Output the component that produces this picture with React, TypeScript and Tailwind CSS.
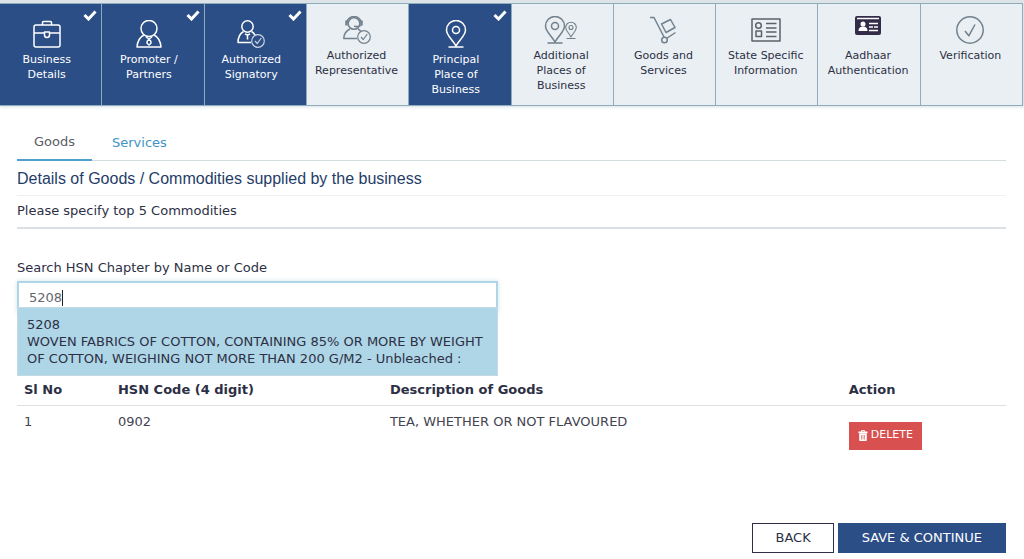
import { useState, type ReactNode } from "react";

type StepState = "done" | "idle";

interface Step {
  label: string;
  lines: string[];
  state: StepState;
  icon: ReactNode;
}

function Drawing({ width, height = 28, children }: { width: number; height?: number; children: ReactNode }) {
  return (
    <svg
      width={width}
      height={height}
      viewBox={`0 0 ${width} ${height}`}
      fill="none"
      stroke="currentColor"
      strokeWidth="1.5"
      strokeLinejoin="round"
      aria-hidden="true"
    >
      {children}
    </svg>
  );
}

const briefcase = (
  <Drawing width={28}>
    <rect x="1" y="5" width="26" height="22" rx="2" />
    <path d="M9.500 5V2.500a1 1 0 0 1 1-1h7a1 1 0 0 1 1 1V5M1 13h10.500M16.500 13H27M11.500 12h5v3a2.500 2.500 0 0 1-5 0z" />
  </Drawing>
);

const person = (
  <Drawing width={26}>
    <ellipse cx="13" cy="8.500" rx="8" ry="8" />
    <path d="M8 15C4 17 1.500 21 1 27h24c-.5-6-3-10-7-12M10 17l3 2 3-2M13 19c-1.800 1.500-2.300 2.800-2 4.200l2 1.800 2-1.800c.3-1.400-.2-2.700-2-4.200z" />
  </Drawing>
);

const signatory = (
  <Drawing width={28}>
    <circle cx="10.500" cy="6.500" r="5.700" />
    <path d="M6.500 11.500C3 13.500 1 17 1 22.500h13M14.500 11.500c1.800 1 2.700 2.300 3.500 3.700" />
    <path d="M8 14l2.500 1 2.500-1M10.500 15v4.500" />
    <g strokeWidth="1.2" opacity="0.75">
      <circle cx="21" cy="21" r="6.300" />
      <path d="m18 21 2.300 2.500 4-5.500" />
    </g>
  </Drawing>
);

const representative = (
  <Drawing width={28}>
    <path d="M4 6.500a7 6 0 0 1 14 0" />
    <circle cx="11" cy="7.500" r="5.800" />
    <path d="M3.500 4.500v5M18.500 4.500v5" strokeWidth="2.500" />
    <path d="M18 9.500c-1.500 1-3.500 1.200-7 .8M7 13C3.500 14.500 1 17 .8 22.500H14M15 13c1.500.8 2.200 1.500 3 2.500" />
    <circle cx="21" cy="21" r="6.300" strokeWidth="1.200" />
    <path d="m18 21 2.300 2.500 4-5.500" strokeWidth="1.200" />
  </Drawing>
);

const pin = (
  <Drawing width={22}>
    <path d="M11 26C7 19 1.500 15.500 1.500 10a9.500 9.500 0 0 1 19 0C20.500 15.500 15 19 11 26zM3.500 27h15" />
    <circle cx="11" cy="10" r="3.500" />
  </Drawing>
);

const pins = (
  <Drawing width={34}>
    <path d="M11 26C7 19 1.500 15.500 1.500 10a9.500 9.500 0 0 1 19 0C20.500 15.500 15 19 11 26zM3.500 27h15" />
    <circle cx="11" cy="10" r="3.500" />
    <path d="M27 21c-2-4-5.300-6-5.300-9.500a5.300 5.300 0 0 1 10.600 0C32.300 15 29 17 27 21zM22.500 22.500h9" strokeWidth="1.100" />
    <circle cx="27" cy="11.500" r="2" strokeWidth="1.100" />
  </Drawing>
);

const trolley = (
  <Drawing width={28}>
    <path d="M1 1.500h4L15 21M17.500 22.500l9-6M12.500 8 21.500 3.500 26 11.500 17 16.500z" />
    <circle cx="15.500" cy="24" r="2.800" />
  </Drawing>
);

const form = (
  <Drawing width={30}>
    <g stroke="#5f6069">
      <rect x="1" y="3" width="28" height="22" />
      <circle cx="7.500" cy="9.500" r="2.800" />
      <rect x="5" y="15" width="5.500" height="5.500" />
      <path d="M15 7.500h10.500M15 12h10.500M15 16h10.500M15 20.500h10.500" />
    </g>
  </Drawing>
);

const idCard = (
  <Drawing width={26} height={19}>
    <rect x="0" y="0" width="26" height="19" rx="2" fill="#332c48" stroke="none" />
    <path d="M2 2.500h22" stroke="#fff" strokeWidth="1.500" />
    <circle cx="8" cy="8" r="2.500" fill="#fff" stroke="none" />
    <path d="M3.500 15c0-3 1.500-4.500 4.500-4.500s4.500 1.500 4.500 4.500z" fill="#fff" stroke="none" />
    <path d="M14 7.500h9M14 11h4M19 11h4M14 14.500h9" stroke="#fff" strokeWidth="1.500" />
  </Drawing>
);

const verified = (
  <Drawing width={28}>
    <circle cx="14" cy="14" r="13.200" />
    <path d="m9 15 3.800 4.800L19 8.500" />
  </Drawing>
);

const steps: Step[] = [
  { label: "Business Details", lines: ["Business", "Details"], state: "done", icon: briefcase },
  { label: "Promoter / Partners", lines: ["Promoter /", "Partners"], state: "done", icon: person },
  { label: "Authorized Signatory", lines: ["Authorized", "Signatory"], state: "done", icon: signatory },
  { label: "Authorized Representative", lines: ["Authorized", "Representative"], state: "idle", icon: representative },
  { label: "Principal Place of Business", lines: ["Principal", "Place of", "Business"], state: "done", icon: pin },
  { label: "Additional Places of Business", lines: ["Additional", "Places of", "Business"], state: "idle", icon: pins },
  { label: "Goods and Services", lines: ["Goods and", "Services"], state: "idle", icon: trolley },
  { label: "State Specific Information", lines: ["State Specific", "Information"], state: "idle", icon: form },
  { label: "Aadhaar Authentication", lines: ["Aadhaar", "Authentication"], state: "idle", icon: idCard },
  { label: "Verification", lines: ["Verification"], state: "idle", icon: verified },
];

function StepTab({ step }: { step: Step }) {
  const done = step.state === "done";
  return (
    <li className="flex">
      <a
        href="#step"
        className={
          done
            ? "relative flex w-full flex-col items-center border-r border-b border-[#8fabbe] bg-[#2c4e86] pt-4 pr-2 text-white"
            : "flex w-full flex-col items-center border-r border-b border-[#8fabbe] bg-[#e9eff2] pt-3 pr-0.5 text-[#2d2f45]"
        }
      >
        {done && (
          <svg className="absolute top-1.5 right-1" width="14" height="11" viewBox="0 0 14 11" fill="none" aria-hidden="true">
            <path d="m1.500 5 4 4 7-7.500" stroke="#fff" strokeWidth="3" />
          </svg>
        )}
        <span className={done ? "flex h-7 text-white" : "flex h-7 text-[#72818d]"}>{step.icon}</span>
        <span className="mt-1 text-center text-[11px] leading-[15px]">
          {step.lines.map((line) => (
            <span key={line} className="block">
              {line}
            </span>
          ))}
        </span>
      </a>
    </li>
  );
}

export default function App() {
  const [query, setQuery] = useState("5208");

  return (
    <div className="bg-white font-['DejaVu_Sans',Verdana,sans-serif] text-[13px] text-[#2d2f45]">
      <nav aria-label="Registration steps" className="bg-[#dde4e7] pt-[3px] pr-px shadow-[0_1px_3px_#d5e2e8]">
        <ol className="grid h-[103px] grid-cols-10 border-t border-[#8fabbe]">
          {steps.map((step) => (
            <StepTab key={step.label} step={step} />
          ))}
        </ol>
      </nav>

      <main className="pt-5 pr-[18px] pl-[17px]">
        <div role="tablist" className="flex h-[35px] border-b border-[#d5dde0] leading-5">
          <button role="tab" aria-selected="true" className="h-[35px] border-b-2 border-[#4fa0cb] px-[17px] pt-1 pb-1.5 text-[#5c5c66]">
            Goods
          </button>
          <button role="tab" aria-selected="false" className="h-[35px] px-5 pt-1 pb-1.5 text-[#3e93c4]">
            Services
          </button>
        </div>

        <h1 className="border-b border-[#eef0f1] pt-2 pb-1.5 font-['Liberation_Sans',Arial,sans-serif] text-[16px] leading-5 text-[#1f3d68]">
          Details of Goods / Commodities supplied by the business
        </h1>
        <p className="border-b-2 border-[#dde1e4] pt-[5px] pb-1.5 leading-5">Please specify top 5 Commodities</p>

        <div className="relative mt-[29px] h-[118px] w-[481px] max-w-full">
          <label htmlFor="hsn" className="block leading-5">
            Search HSN Chapter by Name or Code
          </label>
          <input
            id="hsn"
            type="text"
            autoComplete="off"
            value={query}
            onChange={(event) => setQuery(event.target.value)}
            className="mt-[3px] block h-8 w-full border-2 border-[#aed6e6] bg-white px-2.5 text-[13px] text-[#66666e] shadow-[0_0_5px_#d3e2e8] outline-none"
          />
          <span className="absolute top-8 left-[45px] h-4 w-px bg-[#222]" />
          <ul className="absolute top-[49px] right-0 left-0 border border-[#c3dae4] bg-[#aed6e6] px-[9px] pt-2 pb-2 leading-[17px]">
            <li>
              <span className="block">5208</span>
              WOVEN FABRICS OF COTTON, CONTAINING 85% OR MORE BY WEIGHT OF COTTON, WEIGHING NOT MORE THAN 200 G/M2 - Unbleached :
            </li>
          </ul>
        </div>

        <table className="w-full table-fixed text-left leading-5">
          <colgroup>
            <col className="w-[9.5%]" />
            <col className="w-[27.5%]" />
            <col className="w-[46.4%]" />
            <col />
          </colgroup>
          <thead>
            <tr className="border-b border-[#dbe0e2]">
              <th className="px-[7px] pt-1 pb-[5px]">Sl No</th>
              <th className="px-[7px] pt-1 pb-[5px]">HSN Code (4 digit)</th>
              <th className="px-[7px] pt-1 pb-[5px]">Description of Goods</th>
              <th className="px-[7px] pt-1 pb-[5px]">Action</th>
            </tr>
          </thead>
          <tbody>
            <tr className="align-top text-[#444450]">
              <td className="px-[7px] pt-1.5">1</td>
              <td className="px-[7px] pt-1.5">0902</td>
              <td className="px-[7px] pt-1.5">TEA, WHETHER OR NOT FLAVOURED</td>
              <td className="px-[7px] pt-4">
                <button className="flex h-7 items-center gap-[3px] bg-[#d95050] px-[9px] pb-0.5 text-[11px] text-white">
                  <svg width="10" height="11" viewBox="0 0 10 11" fill="none" aria-hidden="true">
                    <path d="M3.500 1.800V.6h3v1.200" stroke="#fff" />
                    <path d="M.5 1.500h9v1.700h-9zM1.200 3.500h7.600V10a1 1 0 0 1-1 1H2.200a1 1 0 0 1-1-1z" fill="#fff" />
                    <path d="M3.500 5v4.500M5 5v4.500M6.500 5v4.500" stroke="#d95050" strokeWidth=".6" />
                  </svg>
                  DELETE
                </button>
              </td>
            </tr>
          </tbody>
        </table>

        <div className="mt-[73px] flex justify-end gap-1 pb-1.5">
          <button className="h-[30px] border border-[#332c48] bg-white px-[22px] text-[#2d2f45]">BACK</button>
          <button className="h-[30px] bg-[#2c4e86] px-6 text-white">SAVE &amp; CONTINUE</button>
        </div>
      </main>
    </div>
  );
}
